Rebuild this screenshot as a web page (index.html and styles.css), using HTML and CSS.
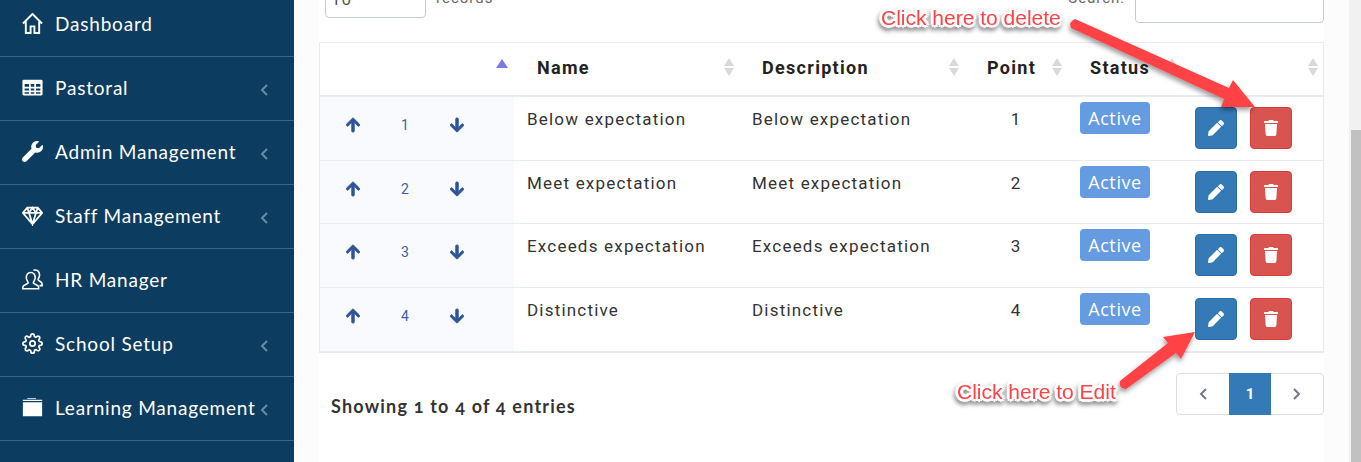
FILE: index.html
```html
<!DOCTYPE html>
<html lang="en">
<head>
  <meta charset="UTF-8">
  <meta name="viewport" content="width=device-width, initial-scale=1.0">
  <title>Grades</title>
  <link rel="stylesheet" href="styles.css">
</head>
<body>

<svg class="defs" width="0" height="0">
  <symbol id="i-up" viewBox="0 0 448 512"><path d="M34.9 289.5l-22.2-22.2c-9.4-9.4-9.4-24.6 0-33.9L207 39c9.4-9.4 24.6-9.4 33.9 0l194.3 194.3c9.4 9.4 9.4 24.6 0 33.9L413 289.4c-9.5 9.5-25 9.3-34.3-.4L264 168.6V456c0 13.3-10.7 24-24 24h-32c-13.3 0-24-10.7-24-24V168.6L69.2 289.1c-9.3 9.8-24.8 10-34.3.4z"/></symbol>
  <symbol id="i-pencil" viewBox="0 0 512 512"><path d="M497.9 142.1l-46.1 46.1c-4.7 4.7-12.3 4.7-17 0l-111-111c-4.7-4.7-4.7-12.3 0-17l46.1-46.1c18.7-18.7 49.1-18.7 67.9 0l60.1 60.1c18.8 18.7 18.8 49.1 0 67.9zM284.2 99.8L21.6 362.4.4 483.9c-2.9 16.4 11.4 30.6 27.8 27.8l121.5-21.3 262.6-262.6c4.7-4.7 4.7-12.3 0-17l-111-111c-4.8-4.7-12.4-4.7-17.1 0z"/></symbol>
  <symbol id="i-trash" viewBox="0 0 448 512"><path d="M432 32H312l-9.4-18.7A24 24 0 0 0 281.1 0H166.8a23.72 23.72 0 0 0-21.4 13.3L136 32H16A16 16 0 0 0 0 48v32a16 16 0 0 0 16 16h416a16 16 0 0 0 16-16V48a16 16 0 0 0-16-16zM53.2 467a48 48 0 0 0 47.9 45h245.8a48 48 0 0 0 47.9-45L416 128H32z"/></symbol>
  <symbol id="i-chev" viewBox="0 0 10 14"><path d="M8 2 3 7l5 5" fill="none" stroke="currentColor" stroke-width="2"/></symbol>
</svg>

<!-- Sidebar -->
<aside class="sidebar">
  <a class="nav-item">
    <svg class="nav-icon" viewBox="1 1 22 22" fill="none" stroke="#fff" stroke-width="2"><path d="M2 12 12 2l10 10M5 10v12h5v-7h4v7h5V10"/></svg>
    <span>Dashboard</span>
  </a>
  <a class="nav-item">
    <svg class="nav-icon" viewBox="0 0 24 20" fill="#fff"><path fill-rule="evenodd" d="M2 1h20a1.500 1.500 0 0 1 1.500 1.500v15A1.500 1.500 0 0 1 22 19H2a1.500 1.500 0 0 1-1.500-1.500v-15A1.500 1.500 0 0 1 2 1zM3 6v3h5V6zm7 0v3h4V6zm6 0v3h5V6zM3 11v2.500h5V11zm7 0v2.500h4V11zm6 0v2.500h5V11zM3 15.500V17h5v-1.500zm7 0V17h4v-1.500zm6 0V17h5v-1.500z"/></svg>
    <span>Pastoral</span>
    <svg class="chev"><use href="#i-chev"/></svg>
  </a>
  <a class="nav-item">
    <svg class="nav-icon" viewBox="0 0 512 512" fill="#fff"><path d="M507.73 109.1c-2.24-9.03-13.54-12.09-20.12-5.51l-74.36 74.36-67.88-11.31-11.31-67.88 74.36-74.36c6.62-6.62 3.43-17.9-5.66-20.16-47.38-11.74-99.55.91-136.58 37.93-39.64 39.64-50.55 97.1-34.05 147.2L18.74 402.76c-24.99 24.99-24.99 65.51 0 90.5 24.99 24.99 65.51 24.99 90.5 0l213.21-213.21c50.12 16.71 107.47 5.68 147.37-34.22 37.07-37.07 49.7-89.32 37.91-136.73z"/></svg>
    <span>Admin Management</span>
    <svg class="chev"><use href="#i-chev"/></svg>
  </a>
  <a class="nav-item">
    <svg class="nav-icon" viewBox="0 0 24 24" fill="none" stroke="#fff" stroke-width="2"><path d="M6 3h12l5 6-11 13L1 9zM1 9h22M8 9l4 13 4-13M6 3l2 6 4-6 4 6 2-6"/></svg>
    <span>Staff Management</span>
    <svg class="chev"><use href="#i-chev"/></svg>
  </a>
  <a class="nav-item">
    <svg class="nav-icon" viewBox="0 0 24 24" fill="none" stroke="#fff" stroke-width="1.800"><path d="M1 22.500v-2c0-2 5-3 6-4.500.5-1-1.500-2.500-2-5-.6-4 1.500-7 5-7s5.500 3 5 7c-.5 2.500-2.500 4-2 5 1 1.500 6 2.500 6 4.500v2z"/><path d="M13 1.500c4-1.500 7.500 1.500 7 6-.3 2.500-2 4-1.500 5 .8 1.500 4.500 2 4.500 4.500v2h-3"/></svg>
    <span>HR Manager</span>
  </a>
  <a class="nav-item">
    <svg class="nav-icon" viewBox="0 0 24 24" fill="none" stroke="#fff" stroke-width="2"><circle cx="12" cy="12" r="3"/><path d="M19.400 15a1.650 1.650 0 0 0 .33 1.820l.06.06a2 2 0 0 1 0 2.830 2 2 0 0 1-2.830 0l-.06-.06a1.650 1.650 0 0 0-1.820-.33 1.650 1.650 0 0 0-1 1.510V21a2 2 0 0 1-2 2 2 2 0 0 1-2-2v-.09A1.650 1.650 0 0 0 9 19.400a1.650 1.650 0 0 0-1.820.33l-.06.06a2 2 0 0 1-2.830 0 2 2 0 0 1 0-2.830l.06-.06a1.650 1.650 0 0 0 .33-1.820 1.650 1.650 0 0 0-1.510-1H3a2 2 0 0 1-2-2 2 2 0 0 1 2-2h.09A1.650 1.650 0 0 0 4.600 9a1.650 1.650 0 0 0-.33-1.820l-.06-.06a2 2 0 0 1 0-2.830 2 2 0 0 1 2.830 0l.06.06a1.650 1.650 0 0 0 1.820.33H9a1.650 1.650 0 0 0 1-1.510V3a2 2 0 0 1 2-2 2 2 0 0 1 2 2v.09a1.650 1.650 0 0 0 1 1.510 1.650 1.650 0 0 0 1.820-.33l.06-.06a2 2 0 0 1 2.830 0 2 2 0 0 1 0 2.830l-.06.06a1.650 1.650 0 0 0-.33 1.820V9a1.650 1.650 0 0 0 1.510 1H21a2 2 0 0 1 2 2 2 2 0 0 1-2 2h-.09a1.650 1.650 0 0 0-1.510 1z"/></svg>
    <span>School Setup</span>
    <svg class="chev"><use href="#i-chev"/></svg>
  </a>
  <a class="nav-item">
    <svg class="nav-icon" viewBox="0 0 24 24" fill="#fff"><path d="M6 1h10v1H6zM1 3h22v1.500H1zM1 6h22v16H1z"/></svg>
    <span>Learning Management</span>
    <svg class="chev"><use href="#i-chev"/></svg>
  </a>
</aside>

<!-- Main content -->
<main class="main">
  <div class="card">
    <div class="table-controls">
      <div class="control">
        <div class="input length-input">10</div>
        <span>records</span>
      </div>
      <div class="control">
        <span>Search:</span>
        <div class="input search-input"></div>
      </div>
    </div>

    <table class="data-table">
      <colgroup>
        <col class="col-order"><col class="col-text"><col class="col-text"><col class="col-point"><col class="col-status"><col class="col-actions">
      </colgroup>
      <thead>
        <tr>
          <th><div class="th-inner"><span></span><i class="sort-asc"></i></div></th>
          <th><div class="th-inner">Name<i class="sort"></i></div></th>
          <th><div class="th-inner">Description<i class="sort"></i></div></th>
          <th><div class="th-inner">Point<i class="sort"></i></div></th>
          <th><div class="th-inner">Status<i class="sort"></i></div></th>
          <th><div class="th-inner"><span></span><i class="sort"></i></div></th>
        </tr>
      </thead>
      <tbody>
        <tr>
          <td class="td-order"><div class="order"><svg class="arrow"><use href="#i-up"/></svg><span>1</span><svg class="arrow down"><use href="#i-up"/></svg></div></td>
          <td>Below expectation</td>
          <td>Below expectation</td>
          <td class="td-point">1</td>
          <td class="td-status"><span class="badge">Active</span></td>
          <td class="td-actions"><div class="actions"><button class="btn btn-edit"><svg><use href="#i-pencil"/></svg></button><button class="btn btn-delete"><svg><use href="#i-trash"/></svg></button></div></td>
        </tr>
        <tr>
          <td class="td-order"><div class="order"><svg class="arrow"><use href="#i-up"/></svg><span>2</span><svg class="arrow down"><use href="#i-up"/></svg></div></td>
          <td>Meet expectation</td>
          <td>Meet expectation</td>
          <td class="td-point">2</td>
          <td class="td-status"><span class="badge">Active</span></td>
          <td class="td-actions"><div class="actions"><button class="btn btn-edit"><svg><use href="#i-pencil"/></svg></button><button class="btn btn-delete"><svg><use href="#i-trash"/></svg></button></div></td>
        </tr>
        <tr>
          <td class="td-order"><div class="order"><svg class="arrow"><use href="#i-up"/></svg><span>3</span><svg class="arrow down"><use href="#i-up"/></svg></div></td>
          <td>Exceeds expectation</td>
          <td>Exceeds expectation</td>
          <td class="td-point">3</td>
          <td class="td-status"><span class="badge">Active</span></td>
          <td class="td-actions"><div class="actions"><button class="btn btn-edit"><svg><use href="#i-pencil"/></svg></button><button class="btn btn-delete"><svg><use href="#i-trash"/></svg></button></div></td>
        </tr>
        <tr>
          <td class="td-order"><div class="order"><svg class="arrow"><use href="#i-up"/></svg><span>4</span><svg class="arrow down"><use href="#i-up"/></svg></div></td>
          <td>Distinctive</td>
          <td>Distinctive</td>
          <td class="td-point">4</td>
          <td class="td-status"><span class="badge">Active</span></td>
          <td class="td-actions"><div class="actions"><button class="btn btn-edit"><svg><use href="#i-pencil"/></svg></button><button class="btn btn-delete"><svg><use href="#i-trash"/></svg></button></div></td>
        </tr>
      </tbody>
    </table>

    <div class="table-footer">
      <div class="info">Showing 1 to 4 of 4 entries</div>
      <div class="pagination">
        <a class="page-link page-arrow"><svg><use href="#i-chev"/></svg></a>
        <a class="page-link page-current">1</a>
        <a class="page-link page-arrow page-next"><svg><use href="#i-chev"/></svg></a>
      </div>
    </div>
  </div>
</main>

<div class="scrollbar"><div class="scrollbar-thumb"></div></div>

<!-- Screenshot annotations -->
<svg class="annotation-arrows" width="1361" height="462">
  <defs>
    <filter id="arrow-shadow" x="-20%" y="-20%" width="140%" height="140%">
      <feDropShadow dx="-1" dy="3" stdDeviation="2.500" flood-color="#000" flood-opacity="0.4"/>
    </filter>
  </defs>
  <g fill="#ff4245" filter="url(#arrow-shadow)">
    <path d="M1075 19 1229 88 1233 80 1255 107 1221 107 1224 99 1071 28Q1068 22 1075 19z"/>
    <path d="M1120 381 1168 343 1163 337 1195 332 1181 359 1176 353 1126 389Q1118 388 1120 381z"/>
  </g>
</svg>
<div class="note note-delete">Click here to delete</div>
<div class="note note-edit">Click here to Edit</div>

</body>
</html>
```

FILE: styles.css
```css
/* General Styles */
* {
  box-sizing: border-box;
}
html, body {
  height: 100%;
}
body {
  margin: 0;
  display: flex;
  overflow: hidden;
  font-family: "Roboto", Arial, sans-serif;
  background: #fcfcfc;
}
.defs {
  position: absolute;
}

/* Sidebar */
.sidebar {
  flex: 0 0 294px;
  height: 100%;
  background: #0c3c60;
  overflow: hidden;
}
.nav-item {
  display: flex;
  align-items: center;
  height: 64px;
  padding: 0 25px 2px 22px;
  border-bottom: 1px solid #3f6481;
  color: #fff;
  font-family: "Lato", Arial, sans-serif;
  font-size: 19px;
  letter-spacing: 0.8px;
  white-space: nowrap;
}
.nav-item:first-child {
  margin-top: -7px;
}
.nav-icon {
  flex: 0 0 21px;
  width: 21px;
  height: 21px;
  margin-right: 12px;
}
.chev {
  width: 10px;
  height: 14px;
  margin-left: auto;
  margin-top: 5px;
  color: #6b8ba3;
}

/* Main */
.main {
  flex: 1;
  height: 100%;
  padding: 0 25px;
  overflow: hidden;
}
.card {
  margin-top: -20px;
  height: calc(100% + 20px);
  background: #fff;
}
.table-controls {
  display: flex;
  justify-content: space-between;
  align-items: flex-start;
  height: 62px;
  padding-left: 6px;
  color: #666;
  font-size: 15px;
  letter-spacing: 1px;
}
.control {
  display: flex;
  gap: 10px;
}
.control span {
  padding-top: 9px;
}
.input {
  border: 1px solid #c2cad8;
  border-radius: 4px;
  background: #fff;
  color: #555;
  font-size: 17px;
}
.length-input {
  width: 101px;
  height: 38px;
  padding: 8px 5px;
}
.search-input {
  width: 189px;
  height: 43px;
}

/* Table */
.data-table {
  width: 1005px;
  table-layout: fixed;
  border-collapse: separate;
  border-spacing: 0;
  border: 1px solid #e7ecf1;
  border-bottom: 0;
  color: #333;
  font-size: 17px;
  letter-spacing: 1.2px;
}
.col-order { width: 194px; }
.col-text { width: 225px; }
.col-point { width: 103px; }
.col-status { width: 115px; }
.col-actions { width: 141px; }
.data-table th {
  height: 54px;
  padding: 0 5px 4px 23px;
  border-bottom: 2px solid #e7ecf1;
  color: #222;
  font-size: 18px;
  font-weight: 700;
  letter-spacing: 1.3px;
  text-align: left;
}
.th-inner {
  display: flex;
  justify-content: space-between;
  align-items: center;
}
.sort, .sort-asc {
  display: block;
  width: 10px;
  height: 18px;
  position: relative;
}
.sort::before, .sort::after {
  content: "";
  position: absolute;
  left: 0;
  border-left: 5px solid transparent;
  border-right: 5px solid transparent;
}
.sort::before {
  top: 0;
  border-bottom: 8px solid #d9d9d9;
}
.sort::after {
  bottom: 0;
  border-top: 8px solid #d9d9d9;
}
.sort-asc {
  right: 3px;
}
.sort-asc::before {
  content: "";
  position: absolute;
  left: 0;
  top: 1px;
  border-left: 6px solid transparent;
  border-right: 6px solid transparent;
  border-bottom: 9px solid #7c7cdb;
}
.data-table td {
  height: 63.67px;
  padding: 10px 13px 0;
  border-bottom: 1px solid #e7ecf1;
  vertical-align: top;
  line-height: 24px;
}
.data-table tbody tr:last-child td {
  height: 64.67px;
  border-bottom-width: 2px;
}
.data-table td.td-order {
  padding: 20px 0 0 7px;
  background: #f9fafd;
}
.order {
  display: grid;
  grid-template-columns: repeat(3, 52px);
  justify-items: center;
  align-items: center;
  color: #3f5f9f;
  font-size: 14px;
  letter-spacing: 0;
  line-height: 16px;
}
.arrow {
  width: 14px;
  height: 16px;
  fill: #2f5597;
  stroke: #2f5597;
  stroke-width: 28;
}
.arrow.down {
  transform: rotate(180deg);
}
.data-table td.td-point {
  letter-spacing: 0;
  text-align: center;
}
.data-table td.td-status {
  padding-top: 5px;
}
.badge {
  display: block;
  width: 70px;
  height: 32px;
  border-radius: 4px;
  background: #659be0;
  color: #fff;
  font-family: "Open Sans", Arial, sans-serif;
  font-size: 18px;
  line-height: 32px;
  letter-spacing: 0.6px;
  text-align: center;
}
.data-table td.td-actions {
  padding-top: 10px;
}
.actions {
  display: flex;
  gap: 13px;
}
.btn {
  display: flex;
  align-items: center;
  justify-content: center;
  width: 42px;
  height: 42px;
  padding: 0;
  border: 1px solid;
  border-radius: 4px;
  fill: #fff;
}
.btn svg {
  width: 16px;
  height: 16px;
}
.btn-edit {
  background: #337ab7;
  border-color: #2e6da4;
}
.btn-delete {
  background: #d9534f;
  border-color: #d43f3a;
}

/* Footer of the table */
.table-footer {
  display: flex;
  justify-content: space-between;
  align-items: flex-start;
  padding: 20px 0 0 12px;
}
.info {
  margin-top: 22px;
  color: #333;
  font-family: "Lato", Arial, sans-serif;
  font-size: 18px;
  font-weight: 700;
  font-variant-numeric: oldstyle-nums;
  letter-spacing: 1.2px;
}
.pagination {
  display: flex;
  height: 42px;
  border: 1px solid #ddd;
  border-radius: 4px;
}
.page-link {
  display: flex;
  align-items: center;
  justify-content: center;
}
.page-arrow {
  width: 52px;
  color: #6c7a89;
}
.page-arrow svg {
  width: 10px;
  height: 14px;
}
.page-next svg {
  transform: scaleX(-1);
}
.page-current {
  width: 42px;
  margin: -1px 0;
  background: #337ab7;
  color: #fff;
  font-size: 15px;
  font-weight: 700;
}

/* Scrollbar */
.scrollbar {
  flex: 0 0 12px;
  height: 100%;
  padding: 130px 0 0 2px;
  background: #f1f1f1;
}
.scrollbar-thumb {
  height: 100%;
  background: #c1c1c1;
}

/* Annotations lie over the page */
.annotation-arrows {
  position: absolute;
  top: 0;
  left: 0;
  pointer-events: none;
}
.note {
  position: absolute;
  color: #ff4245;
  font-family: "Liberation Sans", Arial, sans-serif;
  font-size: 21px;
  line-height: 22px;
  white-space: nowrap;
  text-shadow: 2px 0 0 #fff, -2px 0 0 #fff, 0 2px 0 #fff, 0 -2px 0 #fff, 2px 2px 0 #fff, -2px -2px 0 #fff, 2px -2px 0 #fff, -2px 2px 0 #fff, 3px 0 1px #fff, -3px 0 1px #fff, 0 3px 1px #fff, 0 -3px 1px #fff;
  filter: drop-shadow(-1px 3px 2px rgba(0, 0, 0, 0.45));
}
.note-delete {
  left: 881px;
  top: 7px;
}
.note-edit {
  left: 957px;
  top: 381px;
}
```
